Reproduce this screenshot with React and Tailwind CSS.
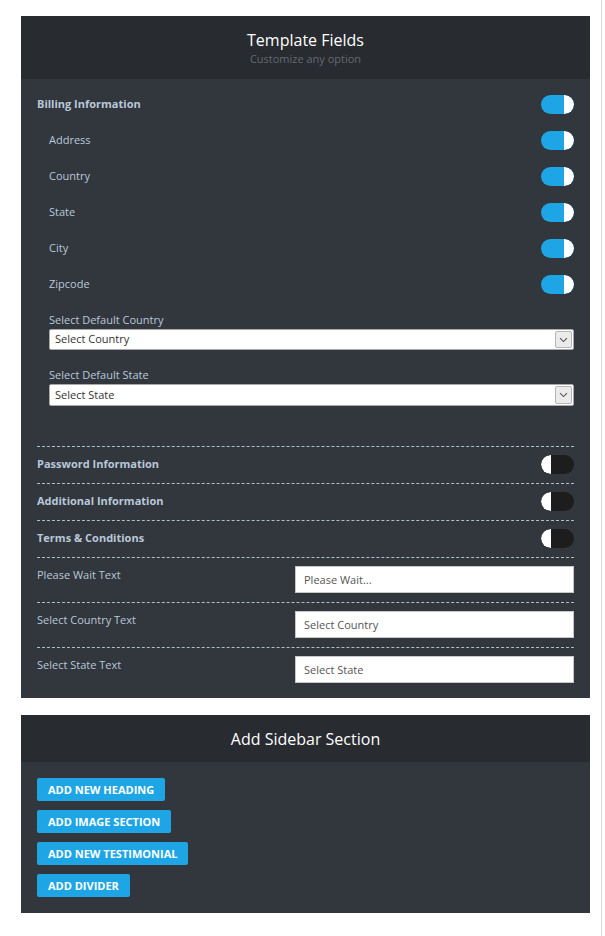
const FONT = { fontFamily: '"Open Sans", "Liberation Sans", sans-serif' };

function Toggle({ on }) {
  return (
    <div
      className={`relative flex h-[19px] w-[33px] overflow-hidden rounded-full ${
        on ? "justify-end bg-[#1ea5e6]" : "justify-start bg-[#1d1d1d]"
      }`}
    >
      <span
        className={`h-full w-[10px] bg-white ${
          on ? "rounded-r-full" : "rounded-l-full"
        }`}
      />
    </div>
  );
}

function ToggleRow({ label, on, bold = false, indent = false }) {
  return (
    <div className="flex h-9 items-center justify-between">
      <span
        className={`text-[11px] leading-[14px] text-[#b9c8d9] ${
          bold ? "font-bold" : ""
        } ${indent ? "pl-3" : ""}`}
      >
        {label}
      </span>
      <Toggle on={on} />
    </div>
  );
}

function FakeSelect({ value, height = "h-[21px]" }) {
  return (
    <div
      className={`flex ${height} items-center justify-between rounded-[2px] border border-[#a9a9a9] bg-white pl-[5px] pr-px`}
    >
      <span className="text-[11px] text-[#333]">{value}</span>
      <span className="flex h-[calc(100%-2px)] w-[17px] items-center justify-center rounded-[2px] border border-[#b5b5b5] bg-[#ebebeb]">
        <svg width="9" height="6" viewBox="0 0 9 6" fill="none">
          <path d="M1 1.2l3.5 3.4L8 1.2" stroke="#555" strokeWidth="1.1" />
        </svg>
      </span>
    </div>
  );
}

function DashedRow({ label, on }) {
  return (
    <div className="flex h-[37px] items-center justify-between border-t border-dashed border-[#aebfd1] pb-[2px]">
      <span className="text-[11px] font-bold leading-[14px] text-[#b9c8d9]">
        {label}
      </span>
      <Toggle on={on} />
    </div>
  );
}

function TextRow({ label, value, last = false }) {
  return (
    <div
      className={`flex items-start justify-between border-t border-dashed border-[#aebfd1] pt-2 ${
        last ? "pb-[15px]" : "pb-[9px]"
      }`}
    >
      <span className="mt-[2px] text-[11px] leading-[14px] text-[#b9c8d9]">
        {label}
      </span>
      <div className="flex h-[27px] w-[279px] items-center border border-[#c8c8c8] bg-white px-[8px] pt-px text-[11px] text-[#555]">
        {value}
      </div>
    </div>
  );
}

function SectionButton({ children }) {
  return (
    <button
      type="button"
      className="h-[23px] self-start rounded-[2px] bg-[#1ea5e6] px-[11px] pt-px text-[11px] font-bold uppercase text-white"
    >
      {children}
    </button>
  );
}

export default function App() {
  return (
    <div className="min-h-screen bg-white" style={FONT}>
      <div className="min-h-screen w-[602px] border-r border-[#dcdcdc] pl-[21px] pt-4 pb-[23px]">
        <div className="w-[569px] bg-[#32363d]">
          <div className="flex h-[63px] flex-col items-center justify-center bg-[#282b2f]">
            <h2 className="text-[16px] leading-[22px] text-white">
              Template Fields
            </h2>
            <p className="text-[11px] leading-[15px] text-[#646a72]">
              Customize any option
            </p>
          </div>

          <div className="px-4 pt-[7px]">
            <ToggleRow label="Billing Information" on bold />
            <ToggleRow label="Address" on indent />
            <ToggleRow label="Country" on indent />
            <ToggleRow label="State" on indent />
            <ToggleRow label="City" on indent />
            <ToggleRow label="Zipcode" on indent />

            <div className="mt-[11px] pl-3">
              <label className="mb-[2px] block text-[11px] leading-[14px] text-[#b9c8d9]">
                Select Default Country
              </label>
              <FakeSelect value="Select Country" />
              <label className="mb-[2px] mt-[18px] block text-[11px] leading-[14px] text-[#b9c8d9]">
                Select Default State
              </label>
              <FakeSelect value="Select State" height="h-[22px]" />
            </div>

            <div className="mt-[40px]">
              <DashedRow label="Password Information" />
              <DashedRow label="Additional Information" />
              <DashedRow label="Terms & Conditions" />
              <TextRow label="Please Wait Text" value="Please Wait..." />
              <TextRow label="Select Country Text" value="Select Country" />
              <TextRow label="Select State Text" value="Select State" last />
            </div>
          </div>
        </div>

        <div className="mt-[17px] w-[569px] bg-[#32363d]">
          <div className="flex h-[47px] items-center justify-center bg-[#282b2f]">
            <h2 className="text-[16px] text-white">Add Sidebar Section</h2>
          </div>
          <div className="flex flex-col gap-[9px] px-4 py-4">
            <SectionButton>Add New Heading</SectionButton>
            <SectionButton>Add Image Section</SectionButton>
            <SectionButton>Add New Testimonial</SectionButton>
            <SectionButton>Add Divider</SectionButton>
          </div>
        </div>
      </div>
    </div>
  );
}
